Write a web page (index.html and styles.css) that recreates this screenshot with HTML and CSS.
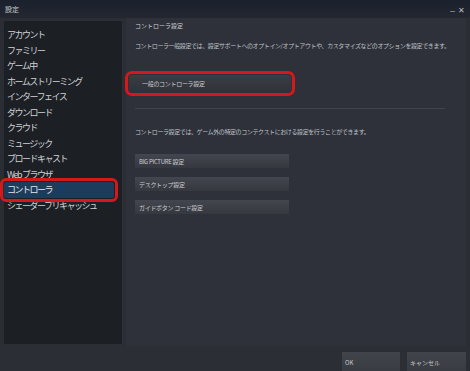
FILE: index.html
```html
<!DOCTYPE html>
<html lang="ja">
<head>
    <meta charset="UTF-8">
    <meta name="viewport" content="width=device-width, initial-scale=1.0">
    <title>設定</title>
    <link rel="stylesheet" href="styles.css">
</head>
<body>
    <div class="window">
        <div class="titlebar">
            <span class="title">設定</span>
            <span class="controls"><span class="min">_</span><span class="close">✕</span></span>
        </div>

        <div class="main">
            <ul class="sidebar">
                <li>アカウント</li>
                <li>ファミリー</li>
                <li>ゲーム中</li>
                <li>ホームストリーミング</li>
                <li>インターフェイス</li>
                <li>ダウンロード</li>
                <li>クラウド</li>
                <li>ミュージック</li>
                <li>ブロードキャスト</li>
                <li>Web&nbsp; ブラウザ</li>
                <li class="selected marked">コントローラ</li>
                <li>シェーダープリキャッシュ</li>
            </ul>

            <div class="content">
                <h2 class="heading">コントローラ設定</h2>
                <p class="desc">コントローラ一般設定では、設定サポートへのオプトイン/オプトアウトや、カスタマイズなどのオプションを設定できます。</p>
                <button class="setting-btn general marked">一般のコントローラ設定</button>
                <hr class="divider">
                <p class="desc second">コントローラ設定では、ゲーム外の特定のコンテクストにおける設定を行うことができます。</p>
                <div class="btn-list">
                    <button class="setting-btn">BIG PICTURE 設定</button>
                    <button class="setting-btn">デスクトップ設定</button>
                    <button class="setting-btn">ガイドボタン コード設定</button>
                </div>
            </div>
        </div>

        <div class="footer">
            <button class="footer-btn ok">OK</button>
            <button class="footer-btn">キャンセル</button>
        </div>
    </div>
</body>
</html>
```

FILE: styles.css
```css
body {
    margin: 0;
    background: #2a2d33;
    font-family: "Noto Sans CJK JP", "Noto Sans", sans-serif;
    overflow: hidden;
}
.window {
    width: 470px;
    height: 371px;
    display: flex;
    flex-direction: column;
    background: #2a2d33;
}
.titlebar {
    height: 18px;
    flex: none;
    display: flex;
    align-items: center;
    justify-content: space-between;
    padding: 0 5px;
    background: linear-gradient(#1a212d, #232730);
    color: #c9ccd1;
    font-size: 7px;
}
.controls {
    display: flex;
    gap: 3px;
    align-items: center;
    color: #b9bcc2;
    font-size: 8px;
}
.controls .min {
    font-size: 9px;
    margin-top: -4px;
}
.main {
    flex: 1;
    display: flex;
    padding: 0 4px 0 4px;
}
.sidebar {
    list-style: none;
    margin: 2px 0 1px 0;
    padding: 6px 8px 0 0;
    width: 110px;
    background: #1c1f24;
    border: 1px solid #2c2f35;
    border-left: none;
}
.sidebar li {
    height: 15.5px;
    line-height: 15.5px;
    padding-left: 3px;
    font-size: 9px;
    letter-spacing: -1.5px;
    color: #cfd1d5;
    white-space: nowrap;
}
.sidebar li.selected {
    background: #1d3c5b;
    color: #e4e6ea;
    border-radius: 2px;
}
.marked {
    outline: 3px solid #d4181c;
    outline-offset: 1px;
    border-radius: 3px;
}
.content {
    flex: 1;
    margin-left: 3px;
    padding: 4px 0 0 9px;
    background: #2e3139;
    color: #bfc2c8;
}
.heading {
    margin: 0;
    font-size: 6px;
    font-weight: normal;
    line-height: 8px;
    color: #cbcdd2;
}
.desc {
    margin: 12px 0 0 0;
    font-size: 6px;
    letter-spacing: -0.4px;
    line-height: 8px;
    white-space: nowrap;
}
.desc.second {
    margin-top: 19px;
}
.setting-btn {
    display: block;
    width: 154px;
    height: 14px;
    padding: 0 0 0 4px;
    border: none;
    background: linear-gradient(#43464e, #35383f);
    color: #caccd1;
    font-family: inherit;
    font-size: 6px;
    letter-spacing: -0.3px;
    text-align: left;
}
.setting-btn.general {
    margin: 25px 0 0 -6px;
    width: 162px;
    height: 17px;
    padding-left: 13px;
    background: linear-gradient(#3a3d45, #2f3238);
}
.divider {
    margin: 16px 21px 0 0;
    border: none;
    height: 1px;
    background: #41444b;
}
.btn-list {
    margin-top: 18px;
    display: flex;
    flex-direction: column;
    gap: 9px;
}
.footer {
    height: 25px;
    flex: none;
    display: flex;
    justify-content: flex-end;
    align-items: flex-start;
    gap: 7px;
    padding: 6px 4px 0 0;
    box-sizing: border-box;
    background: #2b2e35;
}
.footer-btn {
    width: 59px;
    height: 20px;
    padding: 0 0 0 3px;
    border: none;
    background: linear-gradient(#41444c, #383b42);
    color: #c8cacf;
    font-family: inherit;
    font-size: 6px;
    text-align: left;
}
.footer-btn.ok {
    width: 58px;
}
```
